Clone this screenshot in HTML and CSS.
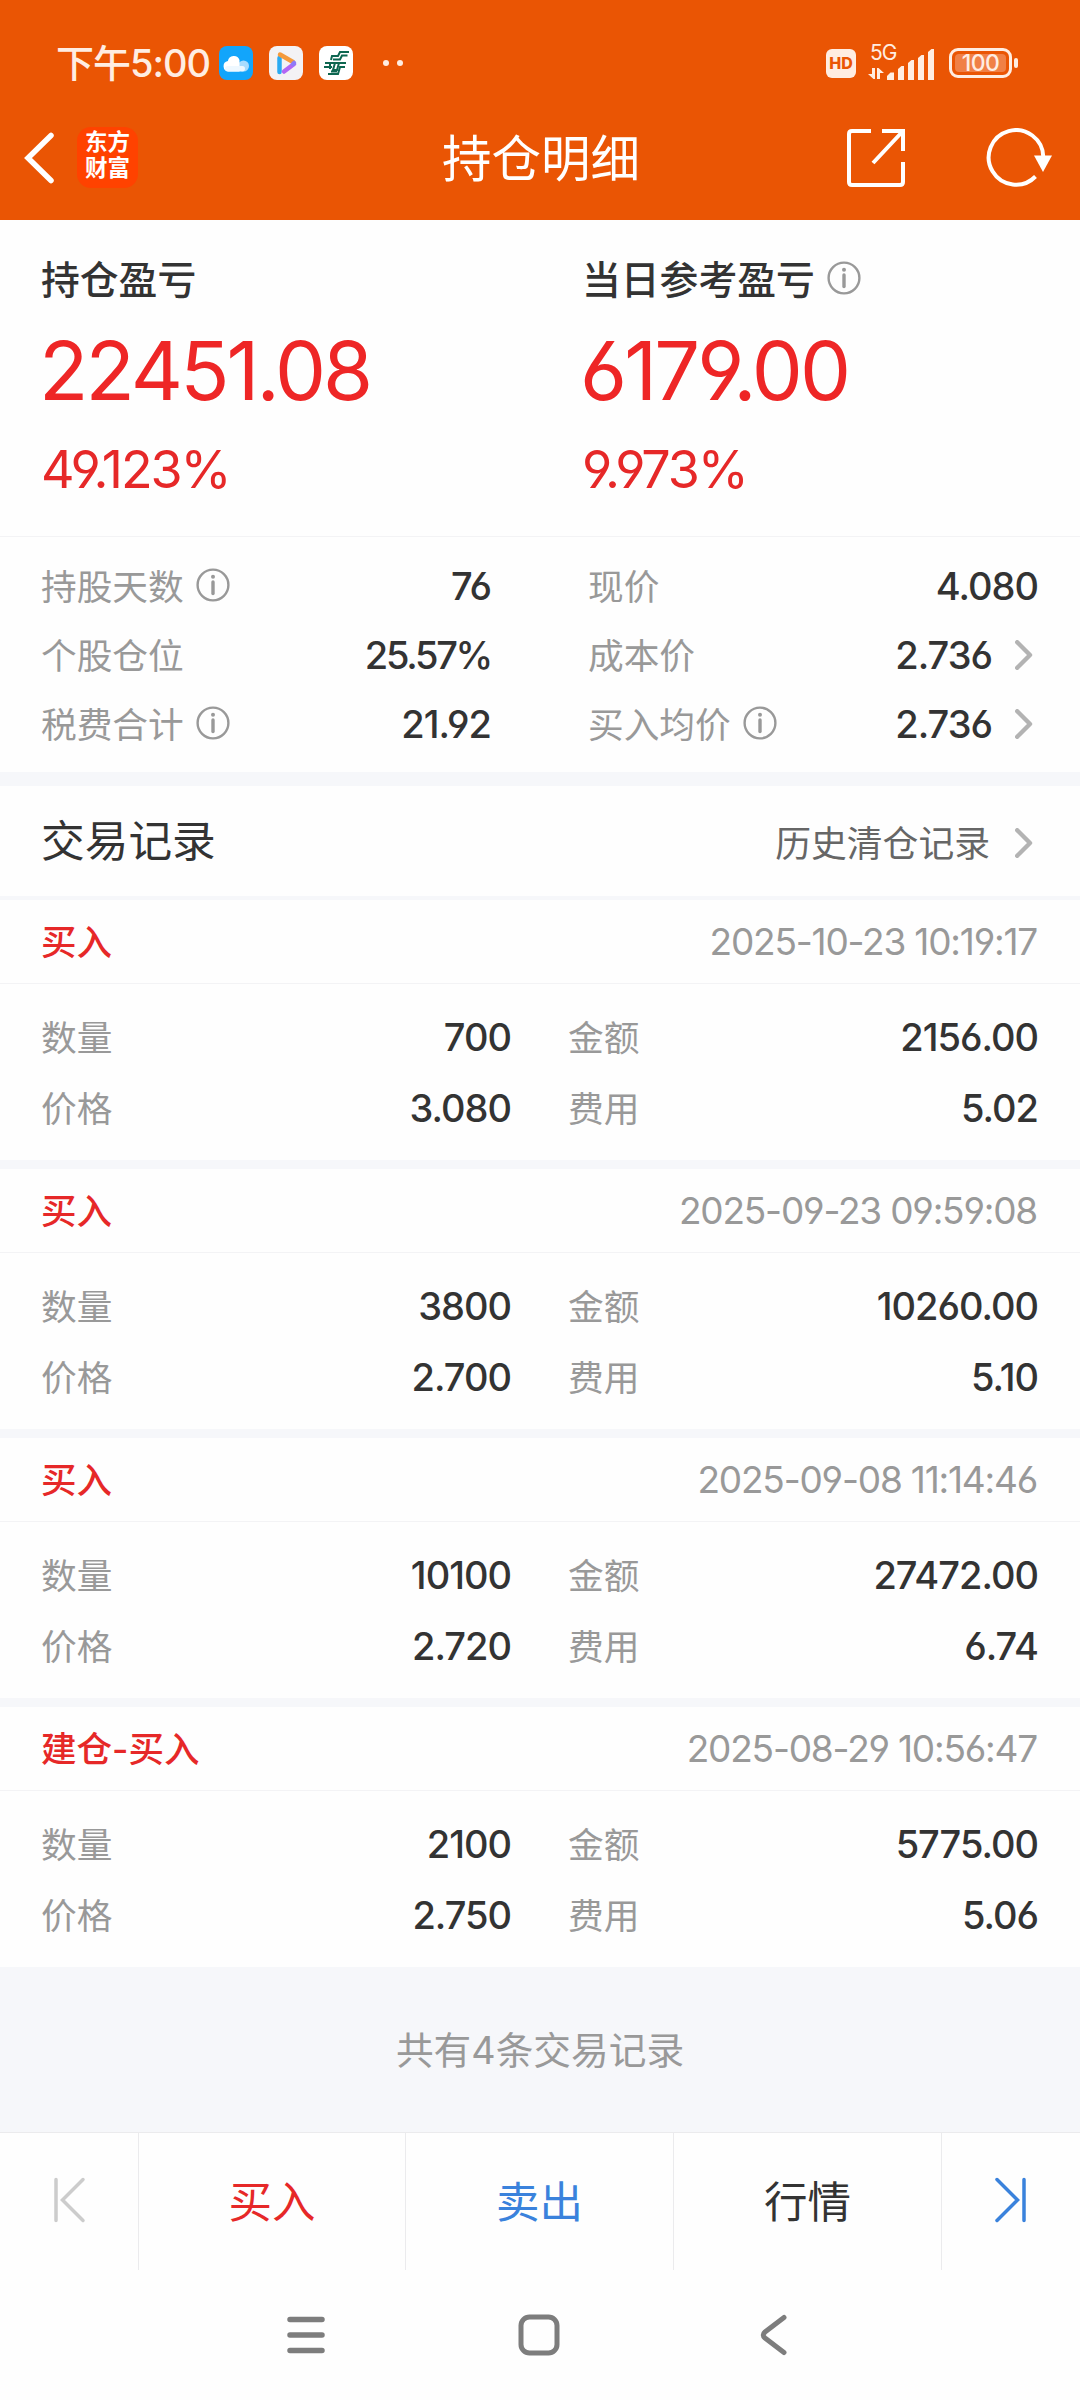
FILE: index.html
```html
<!DOCTYPE html>
<html lang="zh-CN">
<head>
<meta charset="UTF-8">
<meta name="viewport" content="width=device-width, initial-scale=1.0">
<title>持仓明细</title>
<link rel="stylesheet" href="styles.css">
</head>
<body>
<svg width="0" height="0" class="sprite">
    <symbol id="info" viewBox="0 0 34 34">
        <circle cx="17" cy="17" r="15.4" fill="none" stroke="#999" stroke-width="2.4"/>
        <circle cx="17" cy="8.8" r="2" fill="#999"/>
        <path d="M17 14v11.5" stroke="#999" stroke-width="3.4" stroke-linecap="round"/>
    </symbol>
    <symbol id="arrow" viewBox="0 0 18 30">
        <path d="M2.2 2.2L15 15L2.2 27.8" fill="none" stroke="#b3b3b3" stroke-width="4.4" stroke-linecap="round" stroke-linejoin="round"/>
    </symbol>
</svg>

<header class="top">
    <div class="status-bar">
        <span class="time">下午5:00</span>
        <div class="app-icons">
            <svg width="34" height="34" viewBox="0 0 34 34">
                <rect width="34" height="34" rx="8" fill="#12a5fb"/>
                <circle cx="24.500" cy="20" r="5.500" fill="#a9dcfe"/>
                <path d="M9.500 25.500a5.300 5.300 0 0 1-.6-10.500a6 6 0 0 1 11.600-1v11.500z" fill="#fff"/>
                <rect x="6" y="20" width="20" height="5.500" rx="2.700" fill="#eef8ff"/>
            </svg>
            <svg width="34" height="34" viewBox="0 0 34 34">
                <rect width="34" height="34" rx="8" fill="#f3f2f5"/>
                <path d="M10.500 12v14" stroke="#2aaaf2" stroke-width="4.500" stroke-linecap="round"/>
                <path d="M15 25.500L25 18" stroke="#b266f5" stroke-width="4.500" stroke-linecap="round"/>
                <path d="M11 8.500L24 16" stroke="#f59a3c" stroke-width="4.500" stroke-linecap="round"/>
                <path d="M25 17l-1 1" stroke="#8d7bf7" stroke-width="4.500" stroke-linecap="round"/>
            </svg>
            <svg width="34" height="34" viewBox="0 0 34 34">
                <rect width="34" height="34" rx="8" fill="#fff"/>
                <g fill="none" stroke="#0d6650" stroke-width="2">
                    <path d="M30 6H21l-2 4h-6l-1 4"/>
                    <path d="M28.500 9.500H23l-2 4h-7"/>
                    <path d="M6 17h21M5 21h8M16 17l-2 7h4l2-7"/>
                    <path d="M11 16v7M9 28h10l2-7h5M12 25.500h6"/>
                </g>
            </svg>
        </div>
        <div class="dots"><i></i><i></i></div>
        <div class="signals">
            <span class="hd">HD</span>
            <div class="network">
                <span class="net-type">5G</span>
                <svg width="68" height="34" viewBox="0 0 68 34" fill="#ffede2">
                    <path d="M5 22h3v11H6.500L1 28h4z"/>
                    <path d="M10 33V22h1.500l5.500 5h-4v6z"/>
                    <path d="M20 34v-4l3.500-3.500h3.500V34z"/>
                    <path d="M31 34V23l3.500-3h2.500v14z"/>
                    <path d="M41 34V17l3.500-3h2.500v20z"/>
                    <path d="M51 34V12l3.500-3h2.500v25z"/>
                    <path d="M61 34V6l3.500-3h2.500v31z"/>
                </svg>
            </div>
            <div class="battery"><span>100</span></div>
        </div>
    </div>
    <nav class="nav">
        <svg class="back" width="34" height="54" viewBox="0 0 34 54">
            <path d="M30 4.500L7 27L30 49.500" fill="none" stroke="#fff" stroke-width="5.500" stroke-linecap="round"/>
        </svg>
        <div class="logo">东方<br>财富</div>
        <h1>持仓明细</h1>
        <svg class="share" width="60" height="60" viewBox="0 0 60 60" fill="none" stroke="#fff" stroke-width="4">
            <path d="M25 3H6q-3 0-3 3v48q0 3 3 3h48q3 0 3-3V34"/>
            <path d="M36 3h21v20M57 3L27 35"/>
        </svg>
        <svg class="refresh" width="68" height="60" viewBox="0 0 68 60">
            <path d="M50.500 48.500A27.300 27.300 0 1 1 58.300 29" fill="none" stroke="#fff" stroke-width="4"/>
            <path d="M49 27.500h18L58 44z" fill="#fff"/>
        </svg>
    </nav>
</header>

<section class="profit">
    <div class="profit-item">
        <h2>持仓盈亏</h2>
        <p class="amount">22451.08</p>
        <p class="percent">49.123%</p>
    </div>
    <div class="profit-item">
        <h2>当日参考盈亏<svg class="info"><use href="#info"/></svg></h2>
        <p class="amount">6179.00</p>
        <p class="percent">9.973%</p>
    </div>
</section>

<section class="stats">
    <div class="stats-col">
        <div class="row"><label>持股天数<svg class="info"><use href="#info"/></svg></label><b>76</b></div>
        <div class="row"><label>个股仓位</label><b class="ratio">25.57%</b></div>
        <div class="row"><label>税费合计<svg class="info"><use href="#info"/></svg></label><b>21.92</b></div>
    </div>
    <div class="stats-col">
        <div class="row"><label>现价</label><b>4.080</b></div>
        <div class="row link"><label>成本价</label><b>2.736</b><svg class="arrow"><use href="#arrow"/></svg></div>
        <div class="row link"><label>买入均价<svg class="info"><use href="#info"/></svg></label><b>2.736</b><svg class="arrow"><use href="#arrow"/></svg></div>
    </div>
</section>

<section class="records-head">
    <h3>交易记录</h3>
    <a class="history">历史清仓记录<svg class="arrow"><use href="#arrow"/></svg></a>
</section>

<main class="records">
    <article class="record">
        <div class="record-title"><strong>买入</strong><time>2025-10-23 10:19:17</time></div>
        <div class="record-body">
            <div class="row"><label>数量</label><b>700</b></div>
            <div class="row"><label>金额</label><b>2156.00</b></div>
            <div class="row"><label>价格</label><b>3.080</b></div>
            <div class="row"><label>费用</label><b>5.02</b></div>
        </div>
    </article>
    <article class="record">
        <div class="record-title"><strong>买入</strong><time>2025-09-23 09:59:08</time></div>
        <div class="record-body">
            <div class="row"><label>数量</label><b>3800</b></div>
            <div class="row"><label>金额</label><b>10260.00</b></div>
            <div class="row"><label>价格</label><b>2.700</b></div>
            <div class="row"><label>费用</label><b>5.10</b></div>
        </div>
    </article>
    <article class="record">
        <div class="record-title"><strong>买入</strong><time>2025-09-08 11:14:46</time></div>
        <div class="record-body">
            <div class="row"><label>数量</label><b>10100</b></div>
            <div class="row"><label>金额</label><b>27472.00</b></div>
            <div class="row"><label>价格</label><b>2.720</b></div>
            <div class="row"><label>费用</label><b>6.74</b></div>
        </div>
    </article>
    <article class="record">
        <div class="record-title"><strong>建仓-买入</strong><time>2025-08-29 10:56:47</time></div>
        <div class="record-body">
            <div class="row"><label>数量</label><b>2100</b></div>
            <div class="row"><label>金额</label><b>5775.00</b></div>
            <div class="row"><label>价格</label><b>2.750</b></div>
            <div class="row"><label>费用</label><b>5.06</b></div>
        </div>
    </article>
</main>

<p class="total">共有4条交易记录</p>

<div class="tabs">
    <a class="tab">
        <svg width="34" height="46" viewBox="0 0 34 46" fill="none" stroke="#ccc" stroke-width="3.500" stroke-linecap="round">
            <path d="M4 2.500v41M31 2.500L10.500 23L31 43.500"/>
        </svg>
    </a>
    <a class="tab buy">买入</a>
    <a class="tab sell">卖出</a>
    <a class="tab">行情</a>
    <a class="tab">
        <svg width="34" height="46" viewBox="0 0 34 46" fill="none" stroke="#3a82dc" stroke-width="3.500" stroke-linecap="round">
            <path d="M30 2.500v41M3 2.500L23.500 23L3 43.500"/>
        </svg>
    </a>
</div>

<footer class="system-nav">
    <svg width="40" height="42" viewBox="0 0 40 42" stroke="#7d7d7d" stroke-width="5.500" stroke-linecap="round">
        <path d="M4 5.500h32M4 21h32M4 36.500h32"/>
    </svg>
    <svg width="42" height="42" viewBox="0 0 42 42">
        <rect x="3" y="3" width="36" height="36" rx="8.500" fill="none" stroke="#7d7d7d" stroke-width="5"/>
    </svg>
    <svg width="28" height="42" viewBox="0 0 28 42">
        <path d="M25 3.500L6 18Q2.500 21 6 24L25 38.500" fill="none" stroke="#7d7d7d" stroke-width="5" stroke-linecap="round"/>
    </svg>
</footer>
</body>
</html>
```

FILE: styles.css
```css
* {
    box-sizing: border-box;
    margin: 0;
    padding: 0;
}

body {
    width: 1080px;
    height: 2400px;
    font-family: Inter, "Noto Sans CJK SC", sans-serif;
    font-feature-settings: "cv03", "cv04";
    background: #fefefe;
    color: #333;
    overflow: hidden;
}

svg {
    display: block;
    flex: none;
}

.sprite {
    position: absolute;
}

/* header */
.top {
    height: 220px;
    padding-top: 31px;
    background: #ea5504;
    color: #fff;
}

.status-bar {
    display: flex;
    align-items: center;
    height: 64px;
    padding: 0 68px 0 56px;
    color: #ffede2;
}

.time {
    width: 163px;
    font-size: 38px;
    font-weight: 500;
    letter-spacing: -1px;
    line-height: 64px;
    white-space: nowrap;
}

.app-icons {
    display: flex;
    gap: 16px;
}

.dots {
    display: flex;
    gap: 8px;
    margin-left: 30px;
}

.dots i {
    width: 6px;
    height: 6px;
    border-radius: 50%;
    background: #ffede2;
}

.signals {
    display: flex;
    align-items: center;
    margin-left: auto;
}

.hd {
    width: 30px;
    height: 29px;
    border-radius: 6px;
    background: #ffede2;
    color: #ea5504;
    font-size: 16px;
    font-weight: 800;
    line-height: 29px;
    text-align: center;
}

.network {
    position: relative;
    margin: 0 14px 0 11px;
}

.net-type {
    position: absolute;
    left: 3px;
    top: -3px;
    font-size: 21px;
    letter-spacing: -1px;
    line-height: 20px;
}

.battery {
    position: relative;
    width: 63px;
    height: 30px;
    padding: 3px;
    border: 3px solid #ffede2;
    border-radius: 9px;
}

.battery::after {
    content: "";
    position: absolute;
    right: -9px;
    top: 7px;
    width: 4px;
    height: 10px;
    border-radius: 2px;
    background: #ffede2;
}

.battery span {
    display: block;
    height: 18px;
    border-radius: 4px;
    background: #f08046;
    font-size: 23px;
    font-weight: 500;
    letter-spacing: -0.5px;
    line-height: 18px;
    text-align: center;
}

.nav {
    display: flex;
    align-items: center;
    height: 125px;
    padding: 0 27px 0 21px;
}

.logo {
    width: 61px;
    height: 61px;
    margin-left: 22px;
    padding-top: 2px;
    border-radius: 14px;
    background: #ff4200;
    font-size: 22.5px;
    font-weight: 700;
    line-height: 26px;
    text-align: center;
}

.nav h1 {
    flex: 1;
    padding: 0 0 5px 120px;
    font-size: 49.5px;
    font-weight: 400;
    text-align: center;
}

.share {
    margin-right: 79px;
    margin-left: 22px;
}

/* profit */
.profit {
    display: flex;
    height: 317px;
    padding: 31px 0 0 41px;
    border-bottom: 1px solid #f3f3f5;
}

.profit-item {
    flex: none;
    width: 541px;
}

.profit h2 {
    display: flex;
    align-items: center;
    height: 51px;
    margin-bottom: 3px;
    font-size: 38.8px;
    font-weight: 500;
}

.info {
    width: 34px;
    height: 34px;
    margin: 2px 0 0 12px;
}

.amount {
    height: 131px;
    margin-left: -2px;
    color: #ee2626;
    font-size: 81px;
    letter-spacing: -2.9px;
    line-height: 133px;
}

.percent {
    color: #e62828;
    font-size: 52px;
    letter-spacing: -2.1px;
    line-height: 67px;
}

/* position stats */
.stats {
    display: flex;
    justify-content: space-between;
    height: 249px;
    padding: 14px 42px 0 41px;
    border-bottom: 14px solid #f6f7fa;
}

.stats-col {
    width: 450px;
}

.row {
    display: flex;
    align-items: center;
    justify-content: space-between;
    height: 69px;
}

.row label {
    display: flex;
    align-items: center;
    padding-bottom: 3px;
    color: #999;
    font-size: 35.7px;
}

.row b {
    font-size: 38px;
    font-weight: 500;
    letter-spacing: -1px;
}

.row .ratio {
    letter-spacing: -2.3px;
}

.link b {
    margin-left: auto;
}

.arrow {
    width: 18px;
    height: 30px;
    margin: 0 5px 0 23px;
}

/* records */
.records-head {
    display: flex;
    align-items: center;
    justify-content: space-between;
    height: 114px;
    padding: 0 42px 0 41px;
    border-bottom: 4px solid #f6f7fa;
}

.records-head h3 {
    padding-bottom: 7px;
    font-size: 43.7px;
    font-weight: 400;
}

.history {
    display: flex;
    align-items: center;
    color: #666;
    font-size: 35.8px;
}

.history .arrow {
    margin: 3px 5px 0 25px;
}

.record + .record {
    border-top: 9px solid #f6f7fa;
}

.record-title {
    display: flex;
    align-items: center;
    justify-content: space-between;
    height: 84px;
    padding: 0 43px 0 41px;
    border-bottom: 1px solid #f3f3f5;
}

.record-title strong {
    padding-bottom: 4px;
    color: #e62828;
    font-size: 35.5px;
    font-weight: 500;
}

.record-title time {
    color: #999;
    font-size: 37px;
    letter-spacing: -1.2px;
}

.record-body {
    display: grid;
    grid-template-columns: 470px 470px;
    column-gap: 57px;
    align-content: start;
    height: 176px;
    padding: 17px 42px 0 41px;
}

.record-body .row {
    height: 71px;
}

.total {
    height: 165px;
    background: #f6f7fa;
    color: #999;
    font-size: 37.7px;
    line-height: 167px;
    text-align: center;
}

/* bottom bars */
.tabs {
    display: grid;
    grid-template-columns: 139px 267px 268px 268px 138px;
    height: 138px;
    border-top: 1px solid #ebebed;
}

.tab {
    display: flex;
    align-items: center;
    justify-content: center;
    padding-bottom: 4px;
    border-right: 1px solid #ebebed;
    font-size: 43.5px;
}

.tab:last-child {
    border-right: none;
}

.buy {
    color: #e62828;
}

.sell {
    color: #3a82dc;
}

.system-nav {
    display: flex;
    align-items: center;
    height: 130px;
    padding-left: 286px;
}

.system-nav svg + svg {
    margin-left: 192px;
}

.system-nav svg:last-child {
    margin-left: 199px;
}
```
